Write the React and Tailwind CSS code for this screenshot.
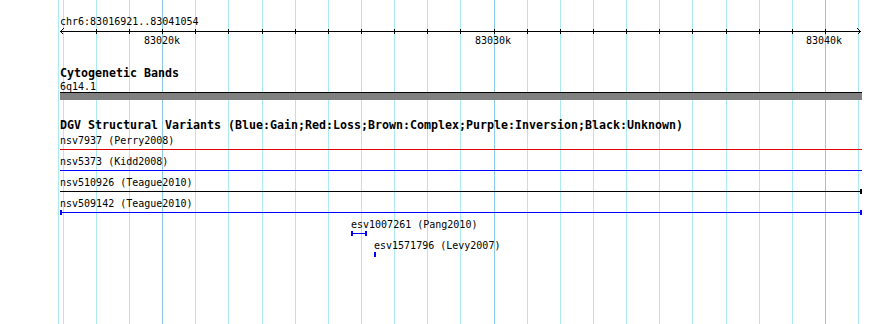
import React from "react";

const ticks = Array.from({ length: 25 }, (_, k) => Math.round(62.6 + 33.15 * k));
const majors = [3, 13, 23];

const labels = [
  { text: "83020k", cls: "left-[144px]" },
  { text: "83030k", cls: "left-[475px]" },
  { text: "83040k", cls: "left-[806px]" },
];

const variants = [
  { id: "nsv7937", label: "nsv7937 (Perry2008)", pad: "pl-[60px]", color: "bg-[#e00000]", w: "w-[802px]" },
  { id: "nsv5373", label: "nsv5373 (Kidd2008)", pad: "pl-[60px]", color: "bg-[#0000ff]", w: "w-[802px]" },
  { id: "nsv510926", label: "nsv510926 (Teague2010)", pad: "pl-[60px]", color: "bg-black", w: "w-[802px]", right: true },
  { id: "nsv509142", label: "nsv509142 (Teague2010)", pad: "pl-[60px]", color: "bg-[#0000ff]", w: "w-[802px]", left: true, right: true },
  { id: "esv1007261", label: "esv1007261 (Pang2010)", pad: "pl-[351px]", color: "bg-[#0000ff]", w: "w-[16px]", left: true, right: true },
  { id: "esv1571796", label: "esv1571796 (Levy2007)", pad: "pl-[374px]", color: "bg-[#0000ff]", w: "w-[2px]", dot: true },
];

function Grid() {
  return (
    <svg className="pointer-events-none absolute inset-0" width="890" height="324">
      <line x1="58.5" y1="0" x2="58.5" y2="324" stroke="#abe9f1" />
      {ticks.map((x, k) => (
        <line
          key={k}
          x1={x + 0.5}
          y1="0"
          x2={x + 0.5}
          y2="324"
          stroke={majors.includes(k) ? "#8ccbe8" : "#abe9f1"}
        />
      ))}
    </svg>
  );
}

function Axis() {
  return (
    <svg className="block" width="890" height="6">
      <line x1="60" y1="3.5" x2="861" y2="3.5" stroke="black" />
      {ticks.slice(1, 24).map((x) => (
        <line key={x} x1={x + 0.5} y1="1" x2={x + 0.5} y2="6" stroke="black" />
      ))}
      <polyline points="64,0 60.5,3.5 64,7" fill="none" stroke="black" />
      <polyline points="857,0 860.5,3.5 857,7" fill="none" stroke="black" />
    </svg>
  );
}

function Bar({ w, color, left, right, dot }) {
  if (dot) return <div className={`h-[5px] w-[2px] ${color}`} />;
  return (
    <div className={`flex h-[5px] items-center ${w}`}>
      {left && <div className={`h-[5px] w-[2px] ${color}`} />}
      <div className={`h-px flex-1 ${color}`} />
      {right && <div className={`h-[5px] w-[2px] ${color}`} />}
    </div>
  );
}

export default function App() {
  return (
    <div className="relative h-[324px] w-[890px] overflow-hidden bg-white font-['DejaVu_Sans_Mono',monospace] text-black">
      <Grid />
      <div className="relative pt-[15px]">
        <div className="h-[13px] whitespace-pre pl-[60px] text-[10px] leading-[13px]">
          chr6:83016921..83041054
        </div>
        <Axis />
        <div className="relative h-[13px] text-[10px] leading-[13px]">
          {labels.map((l) => (
            <span key={l.text} className={`absolute top-0 ${l.cls}`}>
              {l.text}
            </span>
          ))}
        </div>

        <div className="mt-[20px] h-[13px] whitespace-pre pl-[60px] text-[11.63px] font-bold leading-[13px]">
          Cytogenetic Bands
        </div>
        <div className="h-[12px] pl-[60px] text-[10px] leading-[13px]">6q14.1</div>
        <div className="ml-[60px] h-[8px] w-[802px] border-t border-black bg-[#808080]" />

        <div className="mt-[19px] h-[13px] whitespace-pre pl-[60px] text-[11.63px] font-bold leading-[13px]">
          DGV Structural Variants (Blue:Gain;Red:Loss;Brown:Complex;Purple:Inversion;Black:Unknown)
        </div>
        <div className="mt-[2px] flex flex-col">
          {variants.map((v) => (
            <div key={v.id} className={`h-[21px] ${v.pad}`}>
              <div className="h-[13px] whitespace-pre text-[10px] leading-[13px]">{v.label}</div>
              <Bar {...v} />
            </div>
          ))}
        </div>
      </div>
    </div>
  );
}
